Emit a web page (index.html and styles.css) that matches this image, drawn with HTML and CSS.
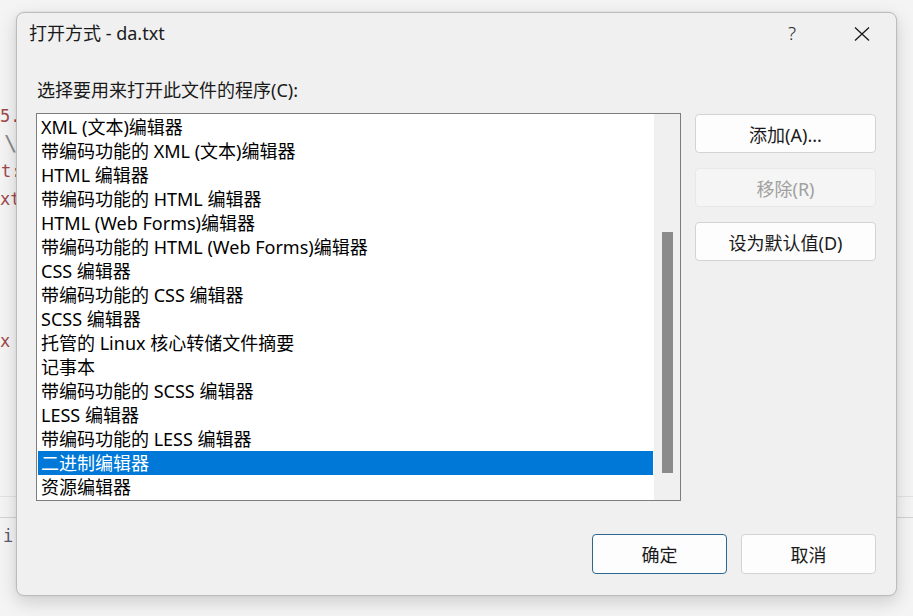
FILE: index.html
```html
<!DOCTYPE html>
<html lang="zh-CN">
<head>
<meta charset="utf-8">
<title>打开方式</title>
<link rel="stylesheet" href="styles.css">
</head>
<body>
<div class="desktop">
  <div class="editor">
    <span class="frag red f1">5.</span>
    <span class="frag grey f2">\</span>
    <span class="frag red f3">t:</span>
    <span class="frag red f4">xt</span>
    <span class="frag red f5">x</span>
    <span class="frag dark f6">i</span>
    <div class="rule r1"></div>
    <div class="rule r2"></div>
  </div>

  <div class="dialog">
    <div class="titlebar">
      <span class="title">打开方式 - da.txt</span>
      <span class="tb-btn help">?</span>
      <span class="tb-btn close">
        <svg width="16" height="16" viewBox="0 0 16 16"><path d="M1 1.5 L15 14.5 M15 1.5 L1 14.5" stroke="#1a1a1a" stroke-width="1.3" fill="none"/></svg>
      </span>
    </div>
    <div class="content">
      <div class="label">选择要用来打开此文件的程序(C):</div>
      <div class="main">
        <div class="listbox">
          <ul class="items">
            <li>XML (文本)编辑器</li>
            <li>带编码功能的 XML (文本)编辑器</li>
            <li>HTML 编辑器</li>
            <li>带编码功能的 HTML 编辑器</li>
            <li>HTML (Web Forms)编辑器</li>
            <li>带编码功能的 HTML (Web Forms)编辑器</li>
            <li>CSS 编辑器</li>
            <li>带编码功能的 CSS 编辑器</li>
            <li>SCSS 编辑器</li>
            <li>托管的 Linux 核心转储文件摘要</li>
            <li>记事本</li>
            <li>带编码功能的 SCSS 编辑器</li>
            <li>LESS 编辑器</li>
            <li>带编码功能的 LESS 编辑器</li>
            <li class="selected">二进制编辑器</li>
            <li>资源编辑器</li>
          </ul>
          <div class="scrollbar"><div class="thumb"></div></div>
        </div>
        <div class="side">
          <button class="btn side-btn">添加(A)...</button>
          <button class="btn side-btn disabled">移除(R)</button>
          <button class="btn side-btn">设为默认值(D)</button>
        </div>
      </div>
      <div class="footer">
        <button class="btn foot-btn default">确定</button>
        <button class="btn foot-btn">取消</button>
      </div>
    </div>
  </div>
</div>
</body>
</html>
```

FILE: styles.css
```css
* { box-sizing: border-box; }
html, body { margin: 0; padding: 0; }
body {
  width: 913px;
  height: 616px;
  overflow: hidden;
  background: #f4f4f4;
  font-family: "Noto Sans", "Noto Sans CJK SC", sans-serif;
  color: #000;
}
.desktop {
  position: relative;
  width: 913px;
  height: 616px;
}
.editor {
  position: absolute;
  inset: 0;
}
.frag {
  position: absolute;
  font-family: "DejaVu Sans Mono", "Liberation Mono", monospace;
  font-size: 17px;
  line-height: 20px;
}
.red { color: #a0484c; }
.grey { color: #8a8a8a; }
.dark { color: #5a5e72; }
.f1 { left: 0; top: 106px; }
.f2 { left: 4px; top: 134px; font-size: 22px; }
.f3 { left: 1px; top: 161px; }
.f4 { left: 0; top: 189px; }
.f5 { left: 0; top: 331px; }
.f6 { left: 3px; top: 526px; }
.rule { position: absolute; left: 0; right: 0; height: 1px; }
.r1 { top: 496px; background: #e2e2e2; }
.r2 { top: 517px; background: #d2d2d2; }

.dialog {
  position: absolute;
  left: 16px;
  top: 12px;
  width: 881px;
  height: 584px;
  background: #f0f0f0;
  border: 1px solid #bcbcbc;
  border-radius: 8px;
  box-shadow: 0 6px 18px rgba(0, 0, 0, 0.16), 0 0 3px rgba(0, 0, 0, 0.08);
  display: flex;
  flex-direction: column;
}
.titlebar {
  height: 43px;
  display: flex;
  align-items: center;
  padding: 0 11px 3px 12px;
}
.title {
  font-size: 18px;
  line-height: 24px;
  color: #1a1a1a;
  flex: 1;
}
.tb-btn {
  width: 46px;
  height: 32px;
  display: flex;
  align-items: center;
  justify-content: center;
}
.help {
  font-size: 19px;
  color: #2a2a2a;
  margin-right: 24px;
  font-weight: 300;
}
.close { padding-top: 2px; }
.content {
  flex: 1;
  display: flex;
  flex-direction: column;
  padding: 0 20px 21px 19px;
}
.label {
  margin-top: 22px;
  padding-left: 1px;
  font-size: 18px;
  line-height: 24px;
  color: #1a1a1a;
}
.main {
  margin-top: 11px;
  display: flex;
  gap: 14px;
}
.listbox {
  width: 646px;
  height: 388px;
  border: 1px solid #7d7d7d;
  background: #fff;
  display: flex;
}
.items {
  list-style: none;
  margin: 0;
  padding: 1px 1px 0 1px;
  flex: 1;
}
.items li {
  height: 24px;
  line-height: 24px;
  font-size: 18px;
  padding-left: 3px;
  white-space: nowrap;
  color: #000;
}
.items li.selected {
  background: #0078d7;
  color: #fff;
}
.scrollbar {
  width: 26px;
  background: #f0f0f0;
  display: flex;
  justify-content: center;
}
.thumb {
  margin-top: 118px;
  width: 11px;
  height: 241px;
  background: #8b8b8b;
}
.side {
  margin-top: 1px;
  display: flex;
  flex-direction: column;
  gap: 15px;
}
.btn {
  font-family: "Noto Sans", "Noto Sans CJK SC", sans-serif;
  font-size: 18px;
  color: #1a1a1a;
  background: #fdfdfd;
  border: 1px solid #d3d3d3;
  border-radius: 4px;
  padding: 0;
  display: flex;
  align-items: center;
  justify-content: center;
}
.side-btn {
  width: 181px;
  height: 39px;
}
.side-btn.disabled {
  background: #f5f5f5;
  border-color: #e8e8e8;
  color: #a0a0a0;
}
.footer {
  margin-top: auto;
  display: flex;
  justify-content: flex-end;
  gap: 14px;
}
.foot-btn {
  width: 135px;
  height: 40px;
}
.foot-btn.default {
  border-color: #2c6791;
}
```
